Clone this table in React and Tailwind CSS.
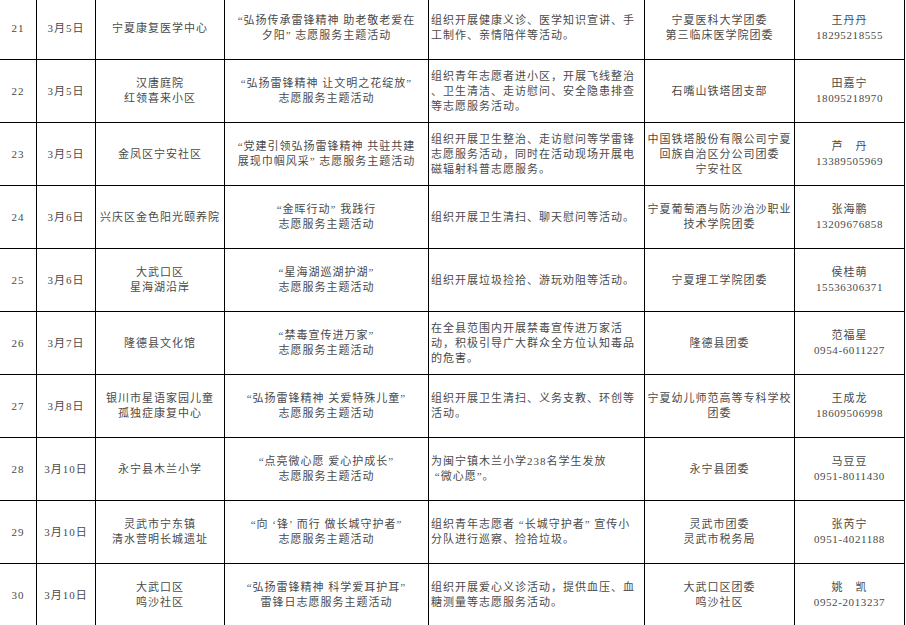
import React from 'react';

const rows = [
  {
    no: '21', date: '3月5日', place: ['宁夏康复医学中心'],
    title: ['“弘扬传承雷锋精神 助老敬老爱在', '夕阳” 志愿服务主题活动'],
    content: ['组织开展健康义诊、医学知识宣讲、手', '工制作、亲情陪伴等活动。'],
    org: ['宁夏医科大学团委', '第三临床医学院团委'], name: '王丹丹', phone: '18295218555',
  },
  {
    no: '22', date: '3月5日', place: ['汉唐庭院', '红领喜来小区'],
    title: ['“弘扬雷锋精神 让文明之花绽放”', '志愿服务主题活动'],
    content: ['组织青年志愿者进小区，开展飞线整治', '、卫生清洁、走访慰问、安全隐患排查', '等志愿服务活动。'],
    org: ['石嘴山铁塔团支部'], name: '田嘉宁', phone: '18095218970',
  },
  {
    no: '23', date: '3月5日', place: ['金凤区宁安社区'],
    title: ['“党建引领弘扬雷锋精神 共驻共建', '展现巾帼风采” 志愿服务主题活动'],
    content: ['组织开展卫生整治、走访慰问等学雷锋', '志愿服务活动，同时在活动现场开展电', '磁辐射科普志愿服务。'],
    org: ['中国铁塔股份有限公司宁夏', '回族自治区分公司团委', '宁安社区'], name: '芦　丹', phone: '13389505969',
  },
  {
    no: '24', date: '3月6日', place: ['兴庆区金色阳光颐养院'],
    title: ['“金晖行动” 我践行', '志愿服务主题活动'],
    content: ['组织开展卫生清扫、聊天慰问等活动。'],
    org: ['宁夏葡萄酒与防沙治沙职业', '技术学院团委'], name: '张海鹏', phone: '13209676858',
  },
  {
    no: '25', date: '3月6日', place: ['大武口区', '星海湖沿岸'],
    title: ['“星海湖巡湖护湖”', '志愿服务主题活动'],
    content: ['组织开展垃圾捡拾、游玩劝阻等活动。'],
    org: ['宁夏理工学院团委'], name: '侯桂萌', phone: '15536306371',
  },
  {
    no: '26', date: '3月7日', place: ['隆德县文化馆'],
    title: ['“禁毒宣传进万家”', '志愿服务主题活动'],
    content: ['在全县范围内开展禁毒宣传进万家活', '动，积极引导广大群众全方位认知毒品', '的危害。'],
    org: ['隆德县团委'], name: '范福星', phone: '0954-6011227',
  },
  {
    no: '27', date: '3月8日', place: ['银川市星语家园儿童', '孤独症康复中心'],
    title: ['“弘扬雷锋精神 关爱特殊儿童”', '志愿服务主题活动'],
    content: ['组织开展卫生清扫、义务支教、环创等', '活动。'],
    org: ['宁夏幼儿师范高等专科学校', '团委'], name: '王成龙', phone: '18609506998',
  },
  {
    no: '28', date: '3月10日', place: ['永宁县木兰小学'],
    title: ['“点亮微心愿 爱心护成长”', '志愿服务主题活动'],
    content: ['为闽宁镇木兰小学238名学生发放', ' “微心愿”。'],
    org: ['永宁县团委'], name: '马豆豆', phone: '0951-8011430',
  },
  {
    no: '29', date: '3月10日', place: ['灵武市宁东镇', '清水营明长城遗址'],
    title: ['“向 ‘锋’ 而行 做长城守护者”', '志愿服务主题活动'],
    content: ['组织青年志愿者 “长城守护者” 宣传小', '分队进行巡察、捡拾垃圾。'],
    org: ['灵武市团委', '灵武市税务局'], name: '张芮宁', phone: '0951-4021188',
  },
  {
    no: '30', date: '3月10日', place: ['大武口区', '鸣沙社区'],
    title: ['“弘扬雷锋精神 科学爱耳护耳”', '雷锋日志愿服务主题活动'],
    content: ['组织开展爱心义诊活动，提供血压、血', '糖测量等志愿服务活动。'],
    org: ['大武口区团委', '鸣沙社区'], name: '姚　凯', phone: '0952-2013237',
  },
];

// one table cell: right + bottom rule, text centred vertically
const Cell = ({ lines, left }) => (
  <div
    className={`border-r border-b border-black flex flex-col justify-center ${
      left ? 'items-start pl-[2px]' : 'items-center'
    }`}
  >
    {lines.map((line, i) => (
      <div key={i} className="whitespace-pre leading-[15px]">
        {line}
      </div>
    ))}
  </div>
);

const App = () => {
  return (
    <div
      lang="zh-CN"
      className="w-[906px] h-[625px] overflow-hidden bg-white text-[#4a4a4a] text-[11px] tracking-[1px]"
      style={{ fontFamily: '"Liberation Serif", "Noto Sans CJK SC", serif' }}
    >
      <div className="-mt-[3px] grid grid-cols-[37px_59px_129px_204px_216px_150px_110px] auto-rows-[63px]">
        {rows.map((r) => (
          <React.Fragment key={r.no}>
            <Cell lines={[r.no]} />
            <Cell lines={[r.date]} />
            <Cell lines={r.place} />
            <Cell lines={r.title} />
            <Cell lines={r.content} left />
            <Cell lines={r.org} />
            <div className="border-r border-b border-black flex flex-col justify-center items-center">
              <div className="leading-[15px]">{r.name}</div>
              <div className="leading-[15px] tracking-[0.6px]">{r.phone}</div>
            </div>
          </React.Fragment>
        ))}
      </div>
    </div>
  );
};

export default App;
